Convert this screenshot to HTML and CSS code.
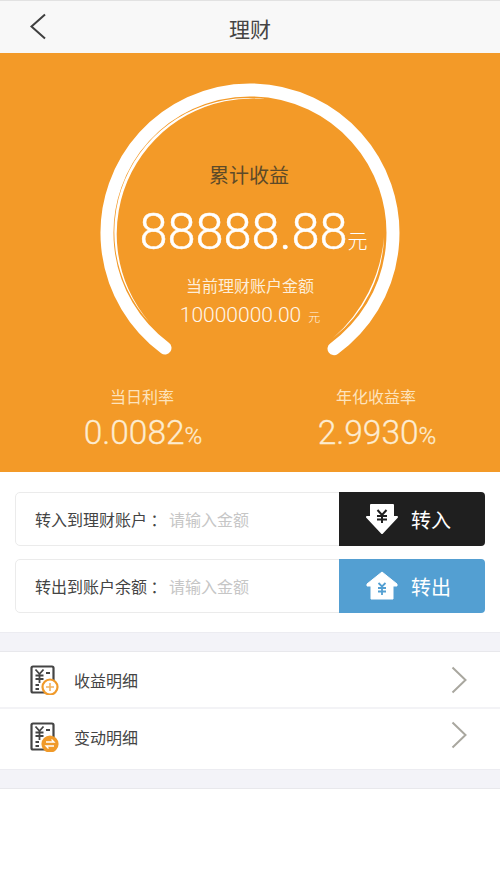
FILE: index.html
```html
<!DOCTYPE html>
<html lang="zh-CN">
<head>
    <meta charset="UTF-8">
    <meta name="viewport" content="width=device-width, initial-scale=1.0">
    <title>理财</title>
    <link rel="stylesheet" href="styles.css">
</head>
<body>
    <div class="header">
        <svg class="back" width="20" height="30" viewBox="0 0 20 30"><path d="M16 2.5 L2.5 14.5 L16 26.5" fill="none" stroke="#3f3f3f" stroke-width="2"/></svg>
        <span class="title">理财</span>
    </div>

    <div class="hero">
        <svg class="gauge" width="500" height="419" viewBox="0 0 500 419">
            <path d="M165 295 A143 143 0 1 1 334 295.700" fill="none" stroke="#fff" stroke-width="13" stroke-linecap="round"/>
            <path d="M265 46 A134 134 0 0 0 150 270 A135.600 135.600 0 0 1 265 46 Z" fill="#fff"/>
            <path d="M384 184 A134 134 0 0 1 333 285 A150 150 0 0 0 384 184 Z" fill="#fff"/>
        </svg>
        <div class="hero-main">
            <div class="total-label">累计收益</div>
            <div class="total-value">88888.88<span class="unit">元</span></div>
            <div class="account-label">当前理财账户金额</div>
            <div class="account-value">10000000.00<span class="unit-small">元</span></div>
        </div>
        <div class="rates">
            <div class="rate">
                <div class="rate-label">当日利率</div>
                <div class="rate-value">0.0082<span class="percent">%</span></div>
            </div>
            <div class="rate">
                <div class="rate-label">年化收益率</div>
                <div class="rate-value">2.9930<span class="percent">%</span></div>
            </div>
        </div>
    </div>

    <div class="forms">
        <div class="form-row">
            <span class="form-label">转入到理财账户 ：</span>
            <span class="placeholder">请输入金额</span>
            <div class="form-btn btn-in">
                <svg width="32" height="30" viewBox="0 0 32 30">
                    <path d="M5 1 H27 V13 H31 L16 29 L1 13 H5 Z" fill="#fff" stroke="#fff" stroke-width="2" stroke-linejoin="round"/>
                    <path d="M11.500 6 L16 11 L20.500 6 M16 11 V19 M11 12 H21 M11 15.500 H21" fill="none" stroke="#1f1f1f" stroke-width="2"/>
                </svg>
                <span>转入</span>
            </div>
        </div>
        <div class="form-row">
            <span class="form-label">转出到账户余额 ：</span>
            <span class="placeholder">请输入金额</span>
            <div class="form-btn btn-out">
                <svg width="32" height="30" viewBox="0 0 32 30">
                    <path d="M16 1 L31 13 V15 H27 V28 H5 V15 H1 V13 Z" fill="#fff" stroke="#fff" stroke-linejoin="round"/>
                    <path d="M12.500 12 L16 15.500 L19.500 12 M16 15.500 V24 M12 17 H20 M12 20.500 H20" fill="none" stroke="#539fd2" stroke-width="1.800"/>
                </svg>
                <span>转出</span>
            </div>
        </div>
    </div>

    <div class="gap"></div>

    <div class="list">
        <div class="list-item">
            <svg class="list-icon" width="30" height="30" viewBox="0 0 30 30">
                <rect x="1.500" y="1.500" width="22" height="26" rx="1.500" fill="none" stroke="#444" stroke-width="2.200"/>
                <path d="M5.500 4.500 L9.500 9 L13.500 4.500 M9.500 9 V18 M5.500 10.500 H13.500 M5.500 14 H13.500 M16 8 H20 M5.500 20 H9 M5.500 24 H9" fill="none" stroke="#444" stroke-width="1.800"/>
                <circle cx="20" cy="22" r="7.500" fill="#fff" stroke="#f09a2a" stroke-width="2.200"/>
                <path d="M16 22 H24 M20 18 V26" stroke="#f2b360" stroke-width="1.600"/>
            </svg>
            <span class="list-text">收益明细</span>
            <svg class="arrow" width="16" height="28" viewBox="0 0 16 28"><path d="M1.500 1.500 L14.500 14 L1.500 26.500" fill="none" stroke="#a9a79f" stroke-width="2"/></svg>
        </div>
        <div class="list-item">
            <svg class="list-icon" width="30" height="30" viewBox="0 0 30 30">
                <rect x="1.500" y="1.500" width="22" height="26" rx="1.500" fill="none" stroke="#444" stroke-width="2.200"/>
                <path d="M5.500 4.500 L9.500 9 L13.500 4.500 M9.500 9 V18 M5.500 10.500 H13.500 M5.500 14 H13.500 M16 8 H20 M5.500 20 H9 M5.500 24 H9" fill="none" stroke="#444" stroke-width="1.800"/>
                <circle cx="20" cy="22" r="7.500" fill="#f09a2a" stroke="#f09a2a" stroke-width="2.200"/>
                <path d="M16 20 H24 L21.500 17.500 M24 24 H16 L18.500 26.500" fill="none" stroke="#fff" stroke-width="1.300"/>
            </svg>
            <span class="list-text">变动明细</span>
            <svg class="arrow" width="16" height="28" viewBox="0 0 16 28"><path d="M1.500 1.500 L14.500 14 L1.500 26.500" fill="none" stroke="#a9a79f" stroke-width="2"/></svg>
        </div>
    </div>

    <div class="gap gap-bottom"></div>
</body>
</html>
```

FILE: styles.css
```css
* {
    box-sizing: border-box;
}

body {
    margin: 0;
    background-color: #fff;
    font-family: "Noto Sans CJK SC", "Noto Sans", sans-serif;
    color: #444;
}

/* Header */
.header {
    height: 53px;
    background-color: #f8f8f8;
    border-top: 1px solid #e2e2e2;
    display: flex;
    align-items: center;
    justify-content: center;
    position: relative;
}

.title {
    font-size: 21px;
    color: #444;
    padding-top: 2px;
}

.back {
    position: absolute;
    left: 29px;
    top: 11px;
}

/* Orange block */
.hero {
    height: 419px;
    background-color: #f39a28;
    position: relative;
    text-align: center;
    color: #fff;
    overflow: hidden;
}

.gauge {
    position: absolute;
    left: 0;
    top: 0;
}

.hero-main {
    position: relative;
    padding-top: 105px;
}

.total-label {
    font-size: 20px;
    line-height: 34px;
    color: #5d4a28;
    padding-right: 2px;
}

.total-value {
    font-family: Roboto, sans-serif;
    font-weight: 300;
    -webkit-text-stroke: 0.5px #fff;
    font-size: 50.5px;
    line-height: 70px;
    margin-top: 5px;
    padding-left: 7px;
}

.unit {
    font-family: "Noto Sans CJK SC", sans-serif;
    -webkit-text-stroke: 0;
    font-size: 20px;
}

.account-label {
    font-size: 16px;
    line-height: 24px;
    margin-top: -3px;
    color: #fdeeda;
}

.account-value {
    font-family: Roboto, sans-serif;
    font-weight: 300;
    font-size: 21px;
    line-height: 30px;
    margin-top: 3px;
    color: #fff6ea;
}

.unit-small {
    font-family: "Noto Sans CJK SC", sans-serif;
    font-size: 12px;
    margin-left: 7px;
}

.rates {
    position: relative;
    display: flex;
    margin-top: 52px;
    padding: 0 7px 0 25px;
}

.rate {
    flex: 1;
    color: #fde3bd;
}

.rate-label {
    font-size: 16px;
    line-height: 24px;
}

.rate-value {
    font-family: Roboto, sans-serif;
    font-weight: 300;
    -webkit-text-stroke: 0.3px #fdecd0;
    font-size: 33.5px;
    line-height: 46px;
    margin-top: 2px;
    padding-left: 2px;
    color: #fdecd0;
}

.percent {
    font-size: 24px;
}

/* Transfer rows */
.forms {
    padding: 20px 15px 19px;
    display: flex;
    flex-direction: column;
    gap: 13px;
}

.form-row {
    height: 54px;
    border: 1px solid #ebebeb;
    border-radius: 5px;
    display: flex;
    align-items: center;
    padding-left: 19px;
    font-size: 16px;
}

.form-label {
    width: 134px;
    color: #444;
    white-space: nowrap;
}

.placeholder {
    flex: 1;
    color: #c6c6c6;
}

.form-btn {
    width: 146px;
    height: 54px;
    margin-right: -1px;
    padding-right: 7px;
    border-radius: 0 4px 4px 0;
    display: flex;
    align-items: center;
    justify-content: center;
    gap: 13px;
    color: #fff;
    font-size: 20px;
}

.btn-in {
    background-color: #1f1f1f;
}

.btn-out {
    background-color: #539fd2;
}

.gap {
    height: 20px;
    background-color: #f3f3f8;
    border-bottom: 1px solid #e8e8ec;
    border-top: 1px solid #ececf1;
}

/* List */
.list-item {
    height: 57px;
    display: flex;
    align-items: center;
    padding: 0 30px;
    border-bottom: 2px solid #f3f3f6;
}

.list-item:last-child {
    height: 60px;
    padding-bottom: 4px;
    border-bottom: none;
}

.list-item:last-child .arrow {
    margin-bottom: 4px;
}

.list-icon {
    margin-right: 14px;
}

.list-text {
    flex: 1;
    font-size: 16px;
    color: #444;
}

.arrow {
    margin-right: 3px;
}
```
